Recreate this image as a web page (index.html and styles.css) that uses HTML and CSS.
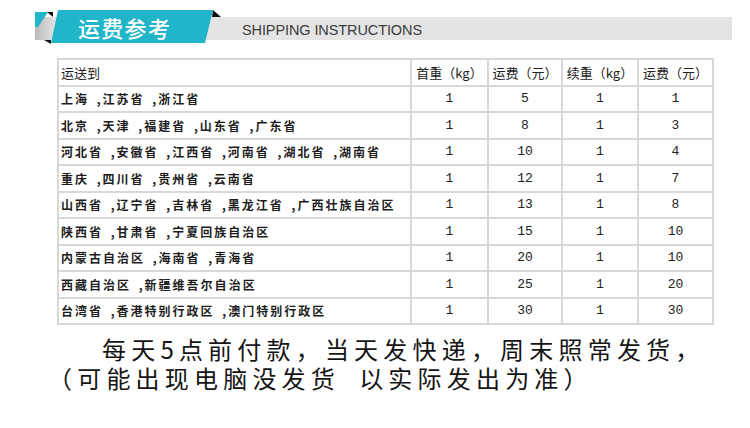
FILE: index.html
```html
<!DOCTYPE html>
<html lang="zh-CN">
<head>
<meta charset="utf-8">
<title>运费参考</title>
<link rel="stylesheet" href="styles.css">
</head>
<body>
<div class="page">
  <div class="header">
    <div class="bar"><span class="bar-text">SHIPPING INSTRUCTIONS</span></div>
    <div class="badge">
      <svg class="ribbon" width="230" height="50" viewBox="0 0 230 50">
        <defs>
          <linearGradient id="endShade" x1="0" y1="0" x2="1" y2="0">
            <stop offset="0" stop-color="#b9b9b9"/>
            <stop offset="1" stop-color="#e4e4e4"/>
          </linearGradient>
        </defs>
        <polygon points="35,17 56,17 52,40 35,40" fill="url(#endShade)"/>
        <polygon points="35,12 48,12 38,27 35,27" fill="#20b5c8"/>
        <polygon points="47,12 53,12 53,17" fill="#111"/>
        <polygon points="44,40 51,40 51,44" fill="#111"/>
        <polygon points="58,10 213,10 205,43 51,43" fill="#20b5c8"/>
        <polygon points="213,10 221,17 212,17" fill="#111"/>
      </svg>
      <span class="badge-text">运费参考</span>
    </div>
  </div>

  <table class="rates">
    <colgroup>
      <col class="c-place"><col class="c-n1"><col class="c-n2"><col class="c-n3"><col class="c-n4">
    </colgroup>
    <tr class="head">
      <td class="place head-place">运送到</td>
      <td>首重（kg）</td>
      <td>运费（元）</td>
      <td>续重（kg）</td>
      <td>运费（元）</td>
    </tr>
    <tr><td class="place">上海 ,江苏省 ,浙江省</td><td class="num">1</td><td class="num">5</td><td class="num">1</td><td class="num">1</td></tr>
    <tr><td class="place">北京 ,天津 ,福建省 ,山东省 ,广东省</td><td class="num">1</td><td class="num">8</td><td class="num">1</td><td class="num">3</td></tr>
    <tr><td class="place">河北省 ,安徽省 ,江西省 ,河南省 ,湖北省 ,湖南省</td><td class="num">1</td><td class="num">10</td><td class="num">1</td><td class="num">4</td></tr>
    <tr><td class="place">重庆 ,四川省 ,贵州省 ,云南省</td><td class="num">1</td><td class="num">12</td><td class="num">1</td><td class="num">7</td></tr>
    <tr><td class="place">山西省 ,辽宁省 ,吉林省 ,黑龙江省 ,广西壮族自治区</td><td class="num">1</td><td class="num">13</td><td class="num">1</td><td class="num">8</td></tr>
    <tr><td class="place">陕西省 ,甘肃省 ,宁夏回族自治区</td><td class="num">1</td><td class="num">15</td><td class="num">1</td><td class="num">10</td></tr>
    <tr><td class="place">内蒙古自治区 ,海南省 ,青海省</td><td class="num">1</td><td class="num">20</td><td class="num">1</td><td class="num">10</td></tr>
    <tr><td class="place">西藏自治区 ,新疆维吾尔自治区</td><td class="num">1</td><td class="num">25</td><td class="num">1</td><td class="num">20</td></tr>
    <tr><td class="place">台湾省 ,香港特别行政区 ,澳门特别行政区</td><td class="num">1</td><td class="num">30</td><td class="num">1</td><td class="num">30</td></tr>
  </table>

  <div class="note">
    <div class="note-line first">每天5点前付款，当天发快递，周末照常发货，</div>
    <div class="note-line second">（可能出现电脑没发货&nbsp;&nbsp;以实际发出为准）</div>
  </div>
</div>
</body>
</html>
```

FILE: styles.css
```css
html, body {
  margin: 0;
  padding: 0;
  background: #ffffff;
}

body {
  font-family: "Noto Sans CJK SC", "Noto Sans", sans-serif;
  color: #1e1e1e;
}

.page {
  width: 750px;
  height: 428px;
  overflow: hidden;
}

.header {
  position: relative;
  padding-top: 17px;
}

.bar {
  margin-left: 35px;
  width: 697px;
  height: 23px;
  box-sizing: border-box;
  padding: 3px 0 0 207px;
  background: #e4e4e4;
  display: flex;
  align-items: center;
}

.bar-text {
  font-family: "Liberation Sans", Arial, sans-serif;
  font-size: 14.5px;
  color: #3c3c3c;
  letter-spacing: -0.1px;
}

.badge {
  position: absolute;
  left: 0;
  top: 0;
  width: 230px;
  height: 50px;
}

.ribbon {
  position: absolute;
  left: 0;
  top: 0;
}

.badge-text {
  position: absolute;
  left: 78px;
  top: 11px;
  font-size: 22px;
  line-height: 32px;
  font-weight: 500;
  color: #ffffff;
  letter-spacing: 1.3px;
  white-space: nowrap;
}

.rates {
  margin: 18px 0 0 57px;
  width: 655px;
  border-collapse: collapse;
  table-layout: fixed;
}

.c-place { width: 353px; }
.c-n1 { width: 77px; }
.c-n2 { width: 74px; }
.c-n3 { width: 76px; }
.c-n4 { width: 75px; }

.rates tr {
  height: 26.5px;
}

.rates td {
  border: 2px solid #d8d8d8;
  padding: 0;
  text-align: center;
  vertical-align: middle;
  font-size: 13px;
  color: #222;
  white-space: nowrap;
  overflow: hidden;
}

.rates td.place {
  text-align: left;
  padding-left: 2px;
  font-size: 12px;
  font-weight: 700;
  letter-spacing: 2px;
  word-spacing: 3px;
  color: #1c1c1c;
}

.rates td.head-place {
  font-size: 13px;
  font-weight: 400;
  letter-spacing: 0;
}

.rates td.num {
  font-family: "Liberation Mono", "Courier New", monospace;
  font-size: 13px;
  color: #222;
}

.note {
  margin-top: 9px;
  padding-left: 48px;
  font-size: 24px;
  line-height: 29px;
  letter-spacing: 5.2px;
  color: #141414;
  white-space: nowrap;
}

.note-line {
  height: 29px;
}

.note-line.first {
  padding-left: 54px;
}

.note-line.second {
  word-spacing: -1px;
}
```
